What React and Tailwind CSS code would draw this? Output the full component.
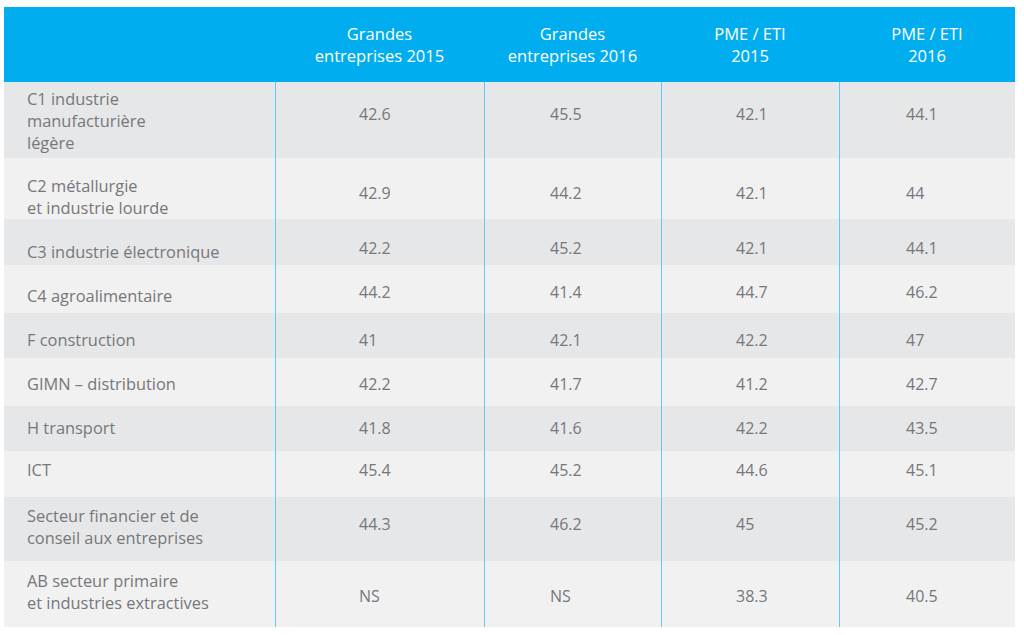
const headers = [
  ["Grandes", "entreprises 2015"],
  ["Grandes", "entreprises 2016"],
  ["PME / ETI", "2015"],
  ["PME / ETI", "2016"],
];

// label lines, values, row height, stripe, top paddings
const rows = [
  { label: ["C1 industrie", "manufacturière", "légère"], values: ["42.6", "45.5", "42.1", "44.1"], h: "h-[76px]", dark: true, numPad: "pt-[21px]", labPad: "pt-[6px]" },
  { label: ["C2 métallurgie", "et industrie lourde"], values: ["42.9", "44.2", "42.1", "44"], h: "h-[61px]", dark: false, numPad: "pt-[24px]", labPad: "pt-[17px]" },
  { label: ["C3 industrie électronique"], values: ["42.2", "45.2", "42.1", "44.1"], h: "h-[46px]", dark: true, numPad: "pt-[18px]", labPad: "pt-[22px]" },
  { label: ["C4 agroalimentaire"], values: ["44.2", "41.4", "44.7", "46.2"], h: "h-[48px]", dark: false, numPad: "pt-[16px]", labPad: "pt-[20px]" },
  { label: ["F construction"], values: ["41", "42.1", "42.2", "47"], h: "h-[45px]", dark: true, numPad: "pt-[16px]", labPad: "pt-[16px]" },
  { label: ["GIMN – distribution"], values: ["42.2", "41.7", "41.2", "42.7"], h: "h-[48px]", dark: false, numPad: "pt-[15px]", labPad: "pt-[15px]" },
  { label: ["H transport"], values: ["41.8", "41.6", "42.2", "43.5"], h: "h-[45px]", dark: true, numPad: "pt-[11px]", labPad: "pt-[11px]" },
  { label: ["ICT"], values: ["45.4", "45.2", "44.6", "45.1"], h: "h-[46px]", dark: false, numPad: "pt-[8px]", labPad: "pt-[8px]" },
  { label: ["Secteur financier et de", "conseil aux entreprises"], values: ["44.3", "46.2", "45", "45.2"], h: "h-[64px]", dark: true, numPad: "pt-[16px]", labPad: "pt-[8px]" },
  { label: ["AB secteur primaire", "et industries extractives"], values: ["NS", "NS", "38.3", "40.5"], h: "h-[66px]", dark: false, numPad: "pt-[24px]", labPad: "pt-[9px]" },
];

const colPad = ["pl-[83px]", "pl-[65px]", "pl-[74px]", "pl-[66px]"];

export default function App() {
  return (
    <div className="w-[1024px] h-[635px] bg-white pt-[7px] pl-[4px] font-['Open_Sans',sans-serif]">
      <div className="grid grid-cols-[271px_209px_177px_178px_176px]">
        <div className="h-[75px] bg-[#00aeef]" />
        {headers.map((hd, i) => (
          <div
            key={i}
            className="h-[75px] bg-[#00aeef] flex flex-col items-center justify-center text-white text-[16.5px] leading-[22px]"
          >
            <span>{hd[0]}</span>
            <span>{hd[1]}</span>
          </div>
        ))}
        {rows.map((r, ri) => {
          const bg = r.dark ? "bg-[#e6e7e8]" : "bg-[#f1f1f1]";
          return [
            <div
              key={ri + "-l"}
              className={`${r.h} ${bg} ${r.labPad} pl-[23px] text-[16.4px] leading-[22px] text-[#76777a]`}
            >
              {r.label.map((t, k) => (
                <div key={k}>{t}</div>
              ))}
            </div>,
            ...r.values.map((v, ci) => (
              <div
                key={ri + "-" + ci}
                className={`${r.h} ${bg} ${r.numPad} ${colPad[ci]} border-l border-[#62c9f3] text-[16px] leading-[22px] text-[#76777a]`}
              >
                {v}
              </div>
            )),
          ];
        })}
      </div>
    </div>
  );
}
